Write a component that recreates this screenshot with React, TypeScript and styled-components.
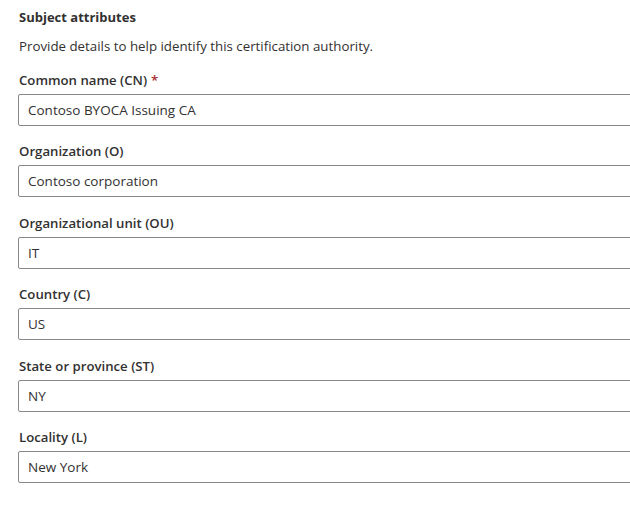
import React from 'react';
import styled, { createGlobalStyle } from 'styled-components';

const GlobalStyle = createGlobalStyle`
    html, body {
        margin: 0;
        padding: 0;
        background: #ffffff;
        overflow: hidden;
    }
    body {
        font-family: "Segoe UI", "Open Sans", "Noto Sans", sans-serif;
        color: #323130;
    }
`

const Panel = styled.section`
    padding: 7px 0 0 19px;
    display: flex;
    flex-direction: column;
`

const Title = styled.h2`
    margin: 0 0 9px;
    font-size: 13px;
    line-height: 20px;
    font-weight: 700;
    color: #323130;
`

const Description = styled.p`
    margin: 0 0 14px;
    font-size: 13.3px;
    line-height: 20px;
    color: #323130;
`

const Field = styled.div`
    display: flex;
    flex-direction: column;
    gap: 4px;
    margin-bottom: 15.4px;
`

const Label = styled.label`
    font-size: 13.2px;
    line-height: 20px;
    font-weight: 600;
    color: #323130;
`

const Required = styled.span`
    color: #a4262c;
    margin-left: 4px;
`

const Input = styled.input`
    box-sizing: border-box;
    width: 640px;
    height: 32px;
    margin-left: -1px;
    padding: 0 9px;
    border: 1px solid #8a8886;
    border-radius: 2px;
    font-family: inherit;
    font-size: 13.5px;
    color: #323130;
    background: #ffffff;
    outline: none;
`

interface IFormField {
    label: string;
    value: string;
    required?: boolean;
}

const FormField: React.FC<IFormField> = ({ label, value, required = false }) => {
    const id = label.replace(/\W+/g, '-').toLowerCase()
    return (
        <Field>
            <Label htmlFor={id}>
                {label}
                {required && <Required>*</Required>}
            </Label>
            <Input id={id} defaultValue={value} />
        </Field>
    )
}

const fields: IFormField[] = [
    { label: 'Common name (CN)', value: 'Contoso BYOCA Issuing CA', required: true },
    { label: 'Organization (O)', value: 'Contoso corporation' },
    { label: 'Organizational unit (OU)', value: 'IT' },
    { label: 'Country (C)', value: 'US' },
    { label: 'State or province (ST)', value: 'NY' },
    { label: 'Locality (L)', value: 'New York' },
]

const App: React.FC = () => {
    return (
        <>
            <GlobalStyle />
            <Panel>
                <Title>Subject attributes</Title>
                <Description>Provide details to help identify this certification authority.</Description>
                {fields.map(f => (
                    <FormField key={f.label} {...f} />
                ))}
            </Panel>
        </>
    )
}

export default App
